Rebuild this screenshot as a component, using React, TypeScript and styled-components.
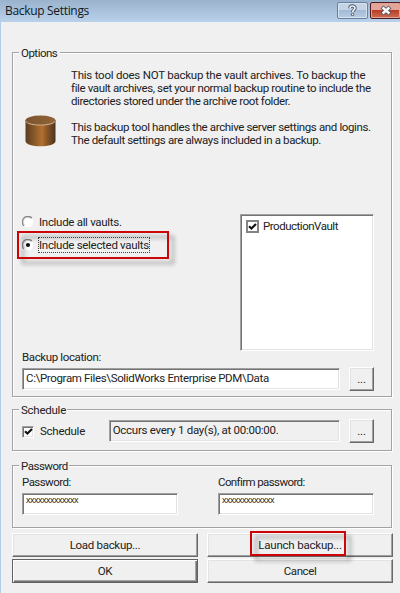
import React from "react";
import styled, { createGlobalStyle, css } from "styled-components";

const GlobalStyle = createGlobalStyle`
  * { box-sizing: border-box; }
  body { margin: 0; background: #f0f0f0; overflow: hidden; }
`;

const Dialog = styled.div`
  width: 400px;
  height: 593px;
  display: flex;
  flex-direction: column;
  background: #f0f0f0;
  color: #222;
  font: 11.5px/13px Roboto, "Liberation Sans", sans-serif;
`;

const TitleBar = styled.header`
  height: 22px;
  flex: none;
  display: flex;
  align-items: flex-start;
  padding: 2px 0 0 5px;
  background: linear-gradient(#9bb2cd, #b9d1ea);
`;

const Title = styled.h1`
  margin: 0;
  flex: 1;
  font: 12px/18px "Open Sans", sans-serif;
  letter-spacing: -0.32px;
  color: #101820;
`;

const CaptionButton = styled.button<{ $close?: boolean }>`
  width: 31px;
  height: 17px;
  padding: 0;
  display: flex;
  align-items: center;
  justify-content: center;
  border: 1px solid ${(p) => (p.$close ? "#4b1c24" : "#68809d")};
  border-radius: 2px;
  box-shadow: inset 0 0 0 1px ${(p) => (p.$close ? "#e2a397" : "#d5e3f1")};
  background: ${(p) =>
    p.$close
      ? "linear-gradient(#e2a598 0 45%, #b93d24 50%, #cf7052)"
      : "linear-gradient(#c4d4e6 0 45%, #a4bad4 50%, #b9cee5)"};
  & + & { margin-left: 2px; margin-right: -1px; }
`;

const Body = styled.main`
  flex: 1;
  padding: 30px 8px 0 11px;
  border-left: 1px solid #b3cdec;
`;

const Group = styled.section<{ $height: number; $gap: number }>`
  position: relative;
  height: ${(p) => p.$height}px;
  margin-bottom: ${(p) => p.$gap}px;
  border: 1px solid #a3a3a3;
  box-shadow: inset 1px 1px 0 #fff, 1px 1px 0 #fff;
`;

const Legend = styled.h2<{ $width: number; $spacing: number }>`
  position: absolute;
  left: 6px;
  top: -6px;
  width: ${(p) => p.$width}px;
  margin: 0;
  padding-left: 2px;
  background: #f0f0f0;
  font: inherit;
  white-space: nowrap;
  letter-spacing: ${(p) => p.$spacing}px;
`;

const Label = styled.span<{ $spacing?: number }>`
  white-space: nowrap;
  letter-spacing: ${(p) => p.$spacing ?? -0.3}px;
`;

const Intro = styled.div`
  display: flex;
  height: 146px;
  padding: 16px 0 0 11px;
`;

const Cylinder = styled.svg`
  flex: none;
  width: 34px;
  height: 34px;
  margin: 45px 13px 0 0;
`;

const Copy = styled.div`
  display: flex;
  flex-direction: column;
`;

const Paragraph = styled.p`
  margin: 0 0 13px;
  display: flex;
  flex-direction: column;
`;

const Selection = styled.div`
  display: flex;
  justify-content: space-between;
  height: 152px;
  padding: 15px 17px 0 9px;
`;

const Choices = styled.div`
  display: flex;
  flex-direction: column;
  gap: 9px;
  padding-top: 1px;
`;

const Choice = styled.div`
  position: relative;
  display: flex;
  align-items: center;
  height: 14px;
  gap: 5px;
`;

const FocusText = styled(Label)`
  outline: 1px dotted #444;
  outline-offset: -1px;
  margin-left: -1px;
  padding: 1px 1px 0 1px;
  line-height: 15px;
`;

const Glyph = styled.svg`
  display: block;
  flex: none;
`;

const sunken = css`
  border: 1px solid;
  border-color: #a0a0a0 #fff #fff #a0a0a0;
  box-shadow: inset 1px 1px 0 #747474, inset -1px -1px 0 #e3e3e3;
`;

const VaultList = styled.div`
  ${sunken}
  width: 134px;
  height: 137px;
  padding: 5px;
  background: #fff;
`;

const VaultRow = styled.div`
  display: flex;
  align-items: center;
  gap: 4px;
`;

const Check = styled.span<{ $flat?: boolean }>`
  width: ${(p) => (p.$flat ? 13 : 12)}px;
  height: ${(p) => (p.$flat ? 13 : 12)}px;
  flex: none;
  display: flex;
  align-items: center;
  justify-content: center;
  background: #fff;
  ${(p) => (p.$flat ? "border: 2px solid #848484;" : sunken)}
`;

const Location = styled.div`
  padding: 0 17px 0 9px;
`;

const FieldRow = styled.div`
  display: flex;
  align-items: flex-start;
  margin-top: 3px;
`;

const Field = styled.div<{ $width: number; $disabled?: boolean }>`
  ${sunken}
  width: ${(p) => p.$width}px;
  height: 22px;
  margin-top: 1px;
  padding: 3px 3px;
  white-space: nowrap;
  background: ${(p) => (p.$disabled ? "#f0f0f0" : "#fff")};
`;

const Button = styled.button<{ $width: number; $default?: boolean }>`
  width: ${(p) => p.$width}px;
  height: 24px;
  padding: 0;
  font: inherit;
  color: inherit;
  background: #f0f0f0;
  border: 1px solid;
  border-color: ${(p) => (p.$default ? "#626262" : "#fff #696969 #696969 #fff")};
  box-shadow: ${(p) =>
    p.$default
      ? "inset 1px 1px 0 #fff, inset -1px -1px 0 #707070, inset -2px -2px 0 #a5a5a5"
      : "inset -1px -1px 0 #a0a0a0, inset 1px 1px 0 #e3e3e3"};
`;

const BrowseButton = styled(Button)`
  margin-left: 9px;
  letter-spacing: -0.2px;
`;

const ScheduleRow = styled.div`
  display: flex;
  align-items: flex-start;
  padding: 9px 17px 0 9px;
`;

const ScheduleCheck = styled.div`
  display: flex;
  align-items: center;
  width: 87px;
  height: 25px;
  gap: 6px;
`;

const Passwords = styled.div`
  display: flex;
  justify-content: space-between;
  padding: 10px 17px 0 9px;
`;

const PasswordColumn = styled.label`
  display: flex;
  flex-direction: column;
  gap: 3px;
`;

const Mask = styled.span`
  display: block;
  font: 9px/7px "Liberation Sans", Arial, sans-serif;
  letter-spacing: -0.5px;
`;

const Actions = styled.footer`
  display: grid;
  grid-template-columns: 186px 186px;
  column-gap: 9px;
  row-gap: 2px;
`;

const ActionCell = styled.div`
  position: relative;
`;

const Callout = styled.div<{ $x: number; $y: number; $w: number; $h: number }>`
  position: absolute;
  left: ${(p) => p.$x}px;
  top: ${(p) => p.$y}px;
  width: ${(p) => p.$w}px;
  height: ${(p) => p.$h}px;
  border: 2px solid #cc0508;
  pointer-events: none;
  filter: drop-shadow(5px 5px 2px rgba(0, 0, 0, 0.35));
`;

const Tick = () => (
  <Glyph width="9" height="9" viewBox="0 0 9 9">
    <path d="M1 4.2 3.4 6.6 8 2" fill="none" stroke="#111" strokeWidth="2.1" />
  </Glyph>
);

const Radio = ({ checked = false }: { checked?: boolean }) => (
  <Glyph width="12" height="12" viewBox="0 0 12 12">
    <circle cx="6" cy="6" r="5.3" fill="#fff" />
    <path d="M1.9 9.9A5.3 5.3 0 0 1 9.9 2" fill="none" stroke="#858585" strokeWidth="1.2" />
    <path d="M2.5 8.9A4.4 4.4 0 0 1 8.9 2.7" fill="none" stroke="#aaa" strokeWidth=".6" />
    {checked && <circle cx="6" cy="6" r="2.1" fill="#111" />}
  </Glyph>
);

const introLines: [string, number][][] = [
  [
    ["This tool does NOT backup the vault archives. To backup the", -0.23],
    ["file vault archives, set your normal backup routine to include the", -0.37],
    ["directories stored under the archive root folder.", -0.4],
  ],
  [
    ["This backup tool handles the archive server settings and logins.", -0.37],
    ["The default settings are always included in a backup.", -0.37],
  ],
];

export default function App() {
  return (
    <Dialog>
      <GlobalStyle />
      <TitleBar>
        <Title>Backup Settings</Title>
        <CaptionButton aria-label="Help">
          <Glyph width="11" height="13" viewBox="0 0 11 13">
            <path d="M3 4.3C3 1.3 8 1.4 8 4.1 8 6 5.7 5.9 5.7 8" fill="none" stroke="#46566a" strokeWidth="3.4" />
            <circle cx="5.6" cy="10.4" r="1.7" fill="#46566a" />
            <path d="M3 4.3C3 1.3 8 1.4 8 4.1 8 6 5.7 5.9 5.7 8" fill="none" stroke="#f4f7fa" strokeWidth="1.6" />
            <circle cx="5.6" cy="10.4" r=".9" fill="#f4f7fa" />
          </Glyph>
        </CaptionButton>
        <CaptionButton $close aria-label="Close">
          <Glyph width="12" height="11" viewBox="0 0 12 11">
            <path d="m2 2 8 7M10 2 2 9" stroke="#515565" strokeWidth="4.2" />
            <path d="m2.6 2.5 6.8 6M9.4 2.5l-6.8 6" stroke="#fafafa" strokeWidth="2.4" />
          </Glyph>
        </CaptionButton>
      </TitleBar>
      <Body>
        <Group $height={345} $gap={12}>
          <Legend $width={41} $spacing={-0.5}>Options</Legend>
          <Intro>
            <Cylinder viewBox="0 0 34 34">
              <defs>
                <linearGradient id="side">
                  <stop offset="0" stopColor="#5a3c20" />
                  <stop offset=".2" stopColor="#7a5028" />
                  <stop offset=".55" stopColor="#b3702f" />
                  <stop offset=".7" stopColor="#8e5827" />
                  <stop offset="1" stopColor="#4b331f" />
                </linearGradient>
                <linearGradient id="lid">
                  <stop offset="0" stopColor="#7a532e" />
                  <stop offset="1" stopColor="#936436" />
                </linearGradient>
              </defs>
              <path d="M1.5 6v21c0 7 30 7 30 0V6Z" fill="url(#side)" />
              <ellipse cx="16.5" cy="6.4" rx="15" ry="4.8" fill="url(#lid)" />
              <path d="M1.7 7.2c2.5 5.2 27 5.2 29.6 0" fill="none" stroke="#d0b393" strokeWidth="1" />
            </Cylinder>
            <Copy>
              {introLines.map((lines, i) => (
                <Paragraph key={i}>
                  {lines.map(([text, spacing]) => (
                    <Label key={text} $spacing={spacing}>{text}</Label>
                  ))}
                </Paragraph>
              ))}
            </Copy>
          </Intro>
          <Selection>
            <Choices>
              <Choice>
                <Radio />
                <Label>Include all vaults.</Label>
              </Choice>
              <Choice>
                <Radio checked />
                <FocusText>Include selected vaults</FocusText>
                <Callout $x={-5} $y={-7} $w={152} $h={28} />
              </Choice>
            </Choices>
            <VaultList>
              <VaultRow>
                <Check $flat><Tick /></Check>
                <Label $spacing={-0.48}>ProductionVault</Label>
              </VaultRow>
            </VaultList>
          </Selection>
          <Location>
            <Label $spacing={-0.37}>Backup location:</Label>
            <FieldRow>
              <Field $width={319}><Label $spacing={-0.35}>C:\Program Files\SolidWorks Enterprise PDM\Data</Label></Field>
              <BrowseButton $width={25}>...</BrowseButton>
            </FieldRow>
          </Location>
        </Group>
        <Group $height={42} $gap={14}>
          <Legend $width={48} $spacing={-0.25}>Schedule</Legend>
          <ScheduleRow>
            <ScheduleCheck>
              <Check><Tick /></Check>
              <Label $spacing={-0.25}>Schedule</Label>
            </ScheduleCheck>
            <Field $width={232} $disabled><Label $spacing={-0.28}>Occurs every 1 day(s), at 00:00:00.</Label></Field>
            <BrowseButton $width={25}>...</BrowseButton>
          </ScheduleRow>
        </Group>
        <Group $height={63} $gap={5}>
          <Legend $width={50} $spacing={-0.5}>Password</Legend>
          <Passwords>
            <PasswordColumn>
              <Label $spacing={-0.55}>Password:</Label>
              <Field $width={156}><Mask>xxxxxxxxxxxxx</Mask></Field>
            </PasswordColumn>
            <PasswordColumn>
              <Label $spacing={-0.6}>Confirm password:</Label>
              <Field $width={156}><Mask>xxxxxxxxxxxxx</Mask></Field>
            </PasswordColumn>
          </Passwords>
        </Group>
        <Actions>
          <Button $width={186}><Label>Load backup...</Label></Button>
          <ActionCell>
            <Button $width={186}><Label $spacing={-0.2}>Launch backup...</Label></Button>
            <Callout $x={43} $y={-2} $w={96} $h={25} />
          </ActionCell>
          <Button $width={186} $default><Label>OK</Label></Button>
          <Button $width={186}><Label $spacing={-0.4}>Cancel</Label></Button>
        </Actions>
      </Body>
    </Dialog>
  );
}
